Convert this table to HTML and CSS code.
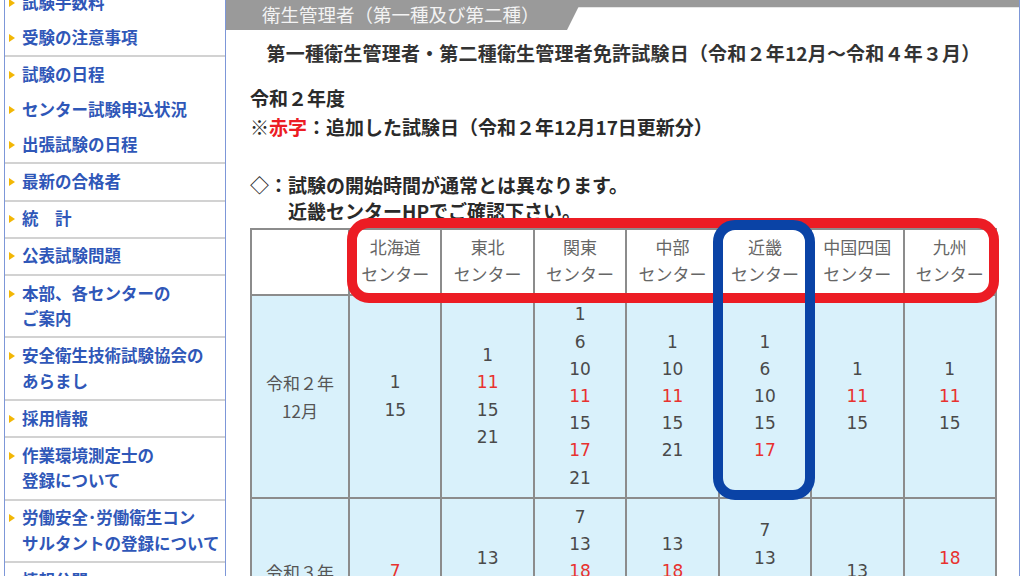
FILE: index.html
```html
<!DOCTYPE html>
<html lang="ja">
<head>
<meta charset="utf-8">
<title>衛生管理者 試験日程</title>
<link rel="stylesheet" href="styles.css">
</head>
<body>
<div class="page">
  <nav class="sidebar">
    <div class="grp grp-first">
      <a class="item"><span>試験手数料</span></a>
      <a class="item"><span>受験の注意事項</span></a>
    </div>
    <div class="grp">
      <a class="item"><span>試験の日程</span></a>
      <a class="item"><span>センター試験申込状況</span></a>
      <a class="item"><span>出張試験の日程</span></a>
    </div>
    <div class="grp"><a class="item"><span>最新の合格者</span></a></div>
    <div class="grp"><a class="item"><span>統　計</span></a></div>
    <div class="grp"><a class="item"><span>公表試験問題</span></a></div>
    <div class="grp"><a class="item"><span>本部、各センターの<br>ご案内</span></a></div>
    <div class="grp"><a class="item"><span>安全衛生技術試験協会の<br>あらまし</span></a></div>
    <div class="grp"><a class="item"><span>採用情報</span></a></div>
    <div class="grp"><a class="item"><span>作業環境測定士の<br>登録について</span></a></div>
    <div class="grp"><a class="item"><span>労働安全･労働衛生コン<br>サルタントの登録について</span></a></div>
    <div class="grp"><a class="item"><span>情報公開</span></a></div>
  </nav>
  <main class="main">
    <div class="tabbar"><div class="tab">衛生管理者（第一種及び第二種）</div></div>
    <div class="content">
      <h2 class="title">第一種衛生管理者・第二種衛生管理者免許試験日（令和２年12月～令和４年３月）</h2>
      <p class="year">令和２年度</p>
      <p class="note">※<span class="red">赤字</span>：追加した試験日（令和２年12月17日更新分）</p>
      <div class="note2">
        <div>◇：試験の開始時間が通常とは異なります。</div>
        <div class="indent">近畿センターHPでご確認下さい。</div>
      </div>
      <div class="table-wrap">
        <table class="sched">
          <colgroup>
            <col class="col-label">
            <col><col><col><col><col><col><col>
          </colgroup>
          <thead>
            <tr>
              <th></th>
              <th>北海道<br>センター</th>
              <th>東北<br>センター</th>
              <th>関東<br>センター</th>
              <th>中部<br>センター</th>
              <th>近畿<br>センター</th>
              <th>中国四国<br>センター</th>
              <th>九州<br>センター</th>
            </tr>
          </thead>
          <tbody>
            <tr>
              <td class="label">令和２年<br>12月</td>
              <td>1<br>15</td>
              <td>1<br><span class="r">11</span><br>15<br>21</td>
              <td>1<br>6<br>10<br><span class="r">11</span><br>15<br><span class="r">17</span><br>21</td>
              <td>1<br>10<br><span class="r">11</span><br>15<br>21</td>
              <td>1<br>6<br>10<br>15<br><span class="r">17</span></td>
              <td>1<br><span class="r">11</span><br>15</td>
              <td>1<br><span class="r">11</span><br>15</td>
            </tr>
            <tr>
              <td class="label">令和３年<br>1月</td>
              <td><span class="r">7</span><br>21</td>
              <td>13<br>20<br>27</td>
              <td>7<br>13<br><span class="r">18</span><br>20<br>22<br>27</td>
              <td>13<br><span class="r">18</span><br>22<br>27</td>
              <td>7<br>13<br>18<br>22<br>27</td>
              <td>13<br>22</td>
              <td><span class="r">18</span><br>22<br>28</td>
            </tr>
          </tbody>
        </table>
        <div class="mark mark-red"></div>
        <div class="mark mark-blue"></div>
      </div>
    </div>
  </main>
</div>
</body>
</html>
```

FILE: styles.css
```css
* { box-sizing: border-box; }
html, body { margin: 0; padding: 0; }
body {
  width: 1024px;
  height: 576px;
  overflow: hidden;
  background: #fff;
  font-family: "Noto Sans CJK JP", "DejaVu Sans", sans-serif;
  color: #333;
}
.page {
  display: flex;
  height: 576px;
  padding-left: 4px;
  overflow: hidden;
}

/* Sidebar */
.sidebar {
  flex: 0 0 222px;
  border-left: 1px solid #7d97d8;
  border-right: 1px solid #7d97d8;
  font-size: 16.5px;
  font-weight: 700;
  color: #2f57b8;
}
.grp { border-bottom: 2px solid #d2d2d2; }
.grp-first { margin-top: -15px; }
.item {
  display: flex;
  align-items: flex-start;
  padding: 4.8px 0;
  line-height: 25.5px;
  white-space: nowrap;
  color: inherit;
  text-decoration: none;
}
.item::before {
  content: "";
  flex: none;
  width: 0;
  height: 0;
  border-left: 6px solid #f2b705;
  border-top: 4px solid transparent;
  border-bottom: 4px solid transparent;
  margin: 9px 7px 0 4px;
}

/* Main */
.main {
  flex: 0 0 794px;
  border-right: 1px solid #7d97d8;
}
.tabbar {
  height: 30px;
  background: linear-gradient(#9a9a9a 0 7px, #e6e6e6 7px 8px, #fff 8px);
}
.tab {
  width: 356px;
  height: 30px;
  background: #9a9a9a;
  clip-path: polygon(0 0, 100% 0, calc(100% - 15px) 100%, 0 100%);
  color: #f3f3f3;
  font-size: 18.5px;
  line-height: 29px;
  padding-left: 36px;
}
.content { padding: 0 22px 0 24px; }
.title {
  margin: 9px 0 0;
  font-size: 19px;
  line-height: 28px;
  font-weight: 700;
  letter-spacing: 0.2px;
  text-align: center;
  color: #333;
}
.year, .note {
  margin: 0;
  font-size: 19px;
  line-height: 29px;
  font-weight: 700;
  color: #2a2a2a;
}
.year { margin-top: 16px; }
.red { color: #ec1c24; }
.note2 {
  margin-top: 31px;
  font-size: 19px;
  line-height: 26px;
  font-weight: 700;
  color: #2a2a2a;
}
.indent { padding-left: 2em; }

/* Table */
.table-wrap {
  position: relative;
  margin-top: 4px;
  width: 747px;
}
.sched {
  width: 747px;
  border-collapse: collapse;
  table-layout: fixed;
  font-family: "DejaVu Sans", "Noto Sans CJK JP", sans-serif;
  font-size: 17px;
  line-height: 27.2px;
  color: #4a4a4a;
}
.col-label { width: 98px; }
.sched th, .sched td {
  border: 2px solid #8c8c8c;
  padding: 5px 0;
  text-align: center;
  vertical-align: middle;
  font-weight: 400;
}
.sched th {
  background: #fff;
  color: #666;
  font-family: "Noto Sans CJK JP", sans-serif;
  padding: 3px 0 7px;
}
.sched td { background: #d9f1fb; }
.sched .label { font-family: "Noto Sans CJK JP", sans-serif; color: #555; }
.r { color: #e8322f; }

/* Annotation overlays */
.mark {
  position: absolute;
  border: 10px solid;
  border-radius: 22px;
  pointer-events: none;
}
.mark-red {
  left: 97px;
  top: -10px;
  width: 652px;
  height: 85px;
  border-color: #ec1c24;
}
.mark-blue {
  left: 463px;
  top: -8px;
  width: 102px;
  height: 280px;
  border-color: #0a43a6;
}
```
